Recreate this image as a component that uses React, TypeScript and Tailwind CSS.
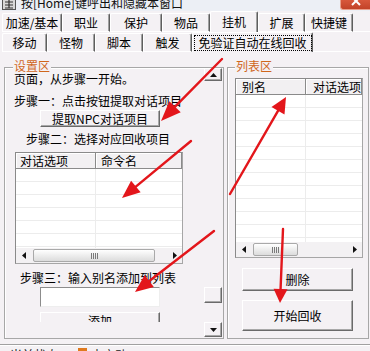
import React from "react";

const RED = "#e3161b";

function Arrow({ x1, y1, x2, y2, L, W }: { x1: number; y1: number; x2: number; y2: number; L: number; W: number }) {
  const dx = x2 - x1;
  const dy = y2 - y1;
  const d = Math.hypot(dx, dy);
  const ux = dx / d;
  const uy = dy / d;
  const bx = x2 - ux * L;
  const by = y2 - uy * L;
  const px = -uy;
  const py = ux;
  const pts = `${x2},${y2} ${bx + (px * W) / 2},${by + (py * W) / 2} ${bx - (px * W) / 2},${by - (py * W) / 2}`;
  return (
    <g>
      <line x1={x1} y1={y1} x2={bx + ux * 2} y2={by + uy * 2} stroke={RED} strokeWidth={2.4} strokeLinecap="round" />
      <polygon points={pts} fill={RED} />
    </g>
  );
}

const RAISED =
  "bg-[#f4f1f4] border border-t-white border-l-white border-r-[#6a6a6a] border-b-[#6a6a6a] shadow-[inset_-1px_-1px_0_#a8a8a8]";

function Tri({ dir }: { dir: "up" | "down" | "left" | "right" }) {
  const p =
    dir === "up" ? "0,4 7,4 3.5,0" : dir === "down" ? "0,0 7,0 3.5,4" : dir === "left" ? "4,0 4,7 0,3.5" : "0,0 0,7 4,3.5";
  const w = dir === "up" || dir === "down" ? 7 : 4;
  const h = dir === "up" || dir === "down" ? 4 : 7;
  return (
    <svg width={w} height={h} viewBox={`0 0 ${w} ${h}`}>
      <polygon points={p} fill="#111" />
    </svg>
  );
}

function HScroll({ thumbClass }: { thumbClass: string }) {
  return (
    <div className="h-[15px] shrink-0 flex items-center bg-[#f3f1f3]">
      <div className="w-[15px] h-full flex items-center justify-center">
        <Tri dir="left" />
      </div>
      <div className="w-[2px]" />
      <div
        className={`${thumbClass} h-[13px] rounded-[2px] border border-[#a9a9a9] bg-gradient-to-b from-white to-[#dcdcdc] flex items-center justify-center gap-[1px]`}
      >
        <div className="w-[1px] h-[6px] bg-[#7a7a7a]" />
        <div className="w-[1px] h-[6px] bg-[#7a7a7a]" />
        <div className="w-[1px] h-[6px] bg-[#7a7a7a]" />
        <div className="w-[1px] h-[6px] bg-[#7a7a7a]" />
      </div>
      <div className="flex-1" />
      <div className="w-[15px] h-full flex items-center justify-center">
        <Tri dir="right" />
      </div>
    </div>
  );
}

function ListView({
  sizeClass,
  col1Class,
  c1,
  c2,
  c1Pad,
  c2Pad,
  rows,
  thumbClass,
}: {
  sizeClass: string;
  col1Class: string;
  c1: string;
  c2: string;
  c1Pad: string;
  c2Pad: string;
  rows: number;
  thumbClass: string;
}) {
  return (
    <div className={`${sizeClass} shrink-0 bg-white border border-t-[#8a8a8a] border-l-[#8a8a8a] border-r-[#a6a6a6] border-b-[#a6a6a6] flex flex-col overflow-hidden`}>
      <div className="h-[16px] shrink-0 flex">
        <div
          className={`${col1Class} ${c1Pad} h-full shrink-0 flex items-center bg-[#f2f0f2] border-r border-b border-r-[#8a8a8a] border-b-[#8a8a8a] shadow-[inset_1px_1px_0_#fff] leading-[12px]`}
        >
          {c1}
        </div>
        <div
          className={`${c2Pad} flex-1 h-full flex items-center bg-[#f2f0f2] border-r border-b border-r-[#8a8a8a] border-b-[#8a8a8a] shadow-[inset_1px_1px_0_#fff] whitespace-nowrap overflow-hidden leading-[12px]`}
        >
          {c2}
        </div>
      </div>
      <div className="flex-1 overflow-hidden">
        {Array.from({ length: rows }).map((_, i) => (
          <div key={i} className="h-[13px] flex border-b border-b-[#ececec]">
            <div className={`${col1Class} shrink-0 h-full border-r border-r-[#ececec]`} />
            <div className="flex-1" />
          </div>
        ))}
      </div>
      <HScroll thumbClass={thumbClass} />
    </div>
  );
}

function Tab({
  wClass,
  sel,
  big,
  children,
}: {
  wClass: string;
  sel?: boolean;
  big?: boolean;
  children: React.ReactNode;
}) {
  if (sel) {
    return (
      <div
        className={`${wClass} ${big ? "h-[21px]" : "h-[20px]"} shrink-0 flex items-center justify-center border-t border-l border-r border-t-white border-l-white border-r-[#5e5e5e] rounded-t-[2px] shadow-[inset_-1px_0_0_#a0a0a0] leading-[12px] whitespace-nowrap`}
      >
        {children}
      </div>
    );
  }
  return (
    <div
      className={`${wClass} h-[19px] shrink-0 flex items-center justify-center border border-t-white border-l-white border-b-white border-r-[#5e5e5e] rounded-t-[2px] shadow-[inset_-1px_0_0_#a0a0a0] leading-[12px] whitespace-nowrap`}
    >
      {children}
    </div>
  );
}

export default function App() {
  return (
    <div className="relative w-[370px] h-[351px] overflow-hidden bg-[#f4f1f4] text-[12px] text-black font-['Noto_Sans_CJK_SC','Noto_Sans',sans-serif] flex flex-col">
      {/* title bar */}
      <div className="h-[11px] shrink-0 overflow-hidden flex bg-[#eceff5]">
        <div className="-mt-[6px] h-[17px] flex items-center pl-[2px]">
          <svg width="14" height="14" viewBox="0 0 14 14">
            <rect x="0.5" y="0.5" width="13" height="13" fill="#d8d8d8" stroke="#555" />
            <path d="M3 3h8M3 6h8M3 9h8M7 2v10M3 12h8" stroke="#333" strokeWidth="1.2" />
          </svg>
          <span className="ml-[5px] leading-[17px] whitespace-nowrap text-[#111]">按[Home]键呼出和隐藏本窗口</span>
        </div>
        <div className="ml-auto w-[30px] h-[10px] bg-gradient-to-b from-[#d8583c] to-[#c24328] border-l border-b border-[#e9a08c] rounded-bl-[3px] flex justify-center overflow-hidden">
          <svg width="10" height="10" viewBox="0 0 10 10" className="-mt-[4px]">
            <path d="M1 1L9 9M9 1L1 9" stroke="#fff" strokeWidth="2" />
          </svg>
        </div>
      </div>

      {/* outer tabs */}
      <div className="h-[21px] shrink-0 flex items-end pl-[2px]">
        <Tab wClass="w-[60px]">加速/基本</Tab>
        <Tab wClass="w-[48px]">职业</Tab>
        <Tab wClass="w-[52px]">保护</Tab>
        <Tab wClass="w-[48px]">物品</Tab>
        <Tab wClass="w-[48px]" sel big>
          挂机
        </Tab>
        <Tab wClass="w-[47px]">扩展</Tab>
        <Tab wClass="w-[48px]">快捷键</Tab>
        <div className="flex-1 h-[1px] bg-white" />
      </div>

      {/* inner tabs */}
      <div className="h-[20px] shrink-0 flex items-end pl-[2px]">
        <Tab wClass="w-[45px]">移动</Tab>
        <Tab wClass="w-[48px]">怪物</Tab>
        <Tab wClass="w-[48px]">脚本</Tab>
        <Tab wClass="w-[49px]">触发</Tab>
        <Tab wClass="w-[121px]" sel>
          <div className="w-[118px] h-[16px] border border-dotted border-black flex items-center justify-center">
            免验证自动在线回收
          </div>
        </Tab>
        <div className="flex-1 h-[1px] bg-white" />
      </div>

      {/* page */}
      <div className="h-[293px] shrink-0 flex pt-[15px] pl-[4px] border-b border-b-[#a0a0a0]">
        {/* left group */}
        <div className="relative w-[220px] h-[272px] shrink-0 border border-[#a7a7a7] shadow-[inset_1px_1px_0_#fff] flex">
          <span className="absolute left-[8px] -top-[8px] px-[1px] bg-[#f4f1f4] text-[#d0661c] leading-[12px]">设置区</span>
          <div className="w-[199px] h-[254px] shrink-0 overflow-hidden flex flex-col items-start">
            <div className="mt-[5px] ml-[9px] leading-[12px] whitespace-nowrap">页面，从步骤一开始。</div>
            <div className="mt-[10px] ml-[9px] leading-[12px] whitespace-nowrap">步骤一：点击按钮提取对话项目</div>
            <div className={`mt-[3px] ml-[35px] w-[120px] h-[17px] shrink-0 flex items-center justify-center leading-[12px] ${RAISED}`}>
              提取NPC对话项目
            </div>
            <div className="mt-[6px] ml-[21px] leading-[12px] whitespace-nowrap">步骤二：选择对应回收项目</div>
            <div className="mt-[7px] ml-[10px]">
              <ListView
                sizeClass="w-[168px] h-[112px]"
                col1Class="w-[80px]"
                c1="对话选项"
                c2="命令名"
                c1Pad="pl-[4px]"
                c2Pad="pl-[5px]"
                rows={7}
                thumbClass="w-[122px]"
              />
            </div>
            <div className="mt-[8px] ml-[15px] leading-[12px] whitespace-nowrap">步骤三：输入别名添加到列表</div>
            <div className="mt-[3px] ml-[35px] w-[120px] h-[20px] shrink-0 bg-white border border-t-[#8c8c8c] border-l-[#8c8c8c] border-r-[#eeeeee] border-b-[#eeeeee]" />
            <div className={`mt-[5px] ml-[35px] w-[120px] h-[17px] shrink-0 flex items-center justify-center leading-[12px] ${RAISED}`}>
              添加
            </div>
          </div>
          <div className="w-[18px] shrink-0 flex flex-col">
            <div className={`h-[13px] shrink-0 flex items-center justify-center ${RAISED}`}>
              <Tri dir="up" />
            </div>
            <div className="h-[206px] shrink-0" />
            <div className={`h-[16px] shrink-0 ${RAISED}`} />
            <div className="h-[19px] shrink-0" />
            <div className={`h-[15px] shrink-0 flex items-center justify-center ${RAISED}`}>
              <Tri dir="down" />
            </div>
          </div>
        </div>

        {/* right group */}
        <div className="relative ml-[3px] w-[142px] h-[272px] shrink-0 border border-[#a7a7a7] shadow-[inset_1px_1px_0_#fff] flex flex-col items-start">
          <span className="absolute left-[7px] -top-[8px] px-[1px] bg-[#f4f1f4] text-[#d0661c] leading-[12px]">列表区</span>
          <div className="mt-[10px] ml-[7px]">
            <ListView
              sizeClass="w-[128px] h-[180px]"
              col1Class="w-[70px]"
              c1="别名"
              c2="对话选项"
              c1Pad="pl-[6px]"
              c2Pad="pl-[7px]"
              rows={12}
              thumbClass="w-[45px]"
            />
          </div>
          <div className={`mt-[10px] ml-[14px] w-[111px] h-[23px] shrink-0 flex items-center justify-center leading-[12px] ${RAISED}`}>
            删除
          </div>
          <div className={`mt-[9px] ml-[14px] w-[111px] h-[31px] shrink-0 flex items-center justify-center leading-[12px] ${RAISED}`}>
            开始回收
          </div>
        </div>
      </div>

      {/* status */}
      <div className="h-[7px] shrink-0 overflow-hidden border-t border-t-white flex items-start pl-[10px]">
        <span className="mt-[3px] leading-[12px] whitespace-nowrap text-[#222]">当前状态</span>
        <div className="ml-[20px] mt-[2px] w-[9px] h-[9px] bg-[#e07a1e]" />
        <span className="ml-[4px] mt-[3px] leading-[12px] whitespace-nowrap text-[#222]">未启动</span>
      </div>

      {/* annotation arrows */}
      <svg className="absolute inset-0 pointer-events-none" width="370" height="351" viewBox="0 0 370 351">
        <Arrow x1={222} y1={59} x2={161} y2={121} L={20} W={16} />
        <Arrow x1={191} y1={141} x2={122} y2={198} L={18} W={15} />
        <Arrow x1={214} y1={231} x2={135} y2={292} L={18} W={15} />
        <Arrow x1={230} y1={194} x2={286} y2={97} L={16} W={15} />
        <Arrow x1={283} y1={229} x2={280} y2={303} L={14} W={14} />
      </svg>
    </div>
  );
}
